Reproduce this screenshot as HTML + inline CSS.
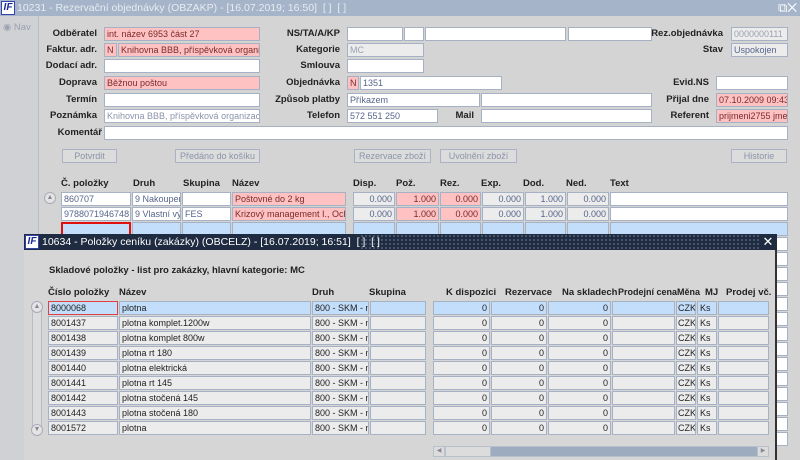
<!DOCTYPE html>
<html><head><meta charset="utf-8"><style>
*{box-sizing:border-box;margin:0;padding:0}
body{width:800px;height:460px;overflow:hidden;background:#d4d4d4;font-family:"Liberation Sans",sans-serif;font-size:10px;position:relative}
div,span{position:absolute}
.f{height:14px;border:1px solid #a6b1c4;background:#fff;line-height:12px;padding:0 2px;white-space:nowrap;overflow:hidden;color:#56658a;font-size:9px}
.p{background:#ffc2c2;color:#7a2a2a}
.g{background:#ececec}
.b{background:#c2defa}
.r{text-align:right}
.l{font-weight:bold;color:#222;text-align:right;width:90px;font-size:9.5px;line-height:14px;white-space:nowrap}
.h{font-weight:bold;color:#222;font-size:9.5px;white-space:nowrap}
.btn{height:14px;border:1px solid #aab3c3;background:#dcdcdc;color:#8a94a8;text-align:center;line-height:12px;font-size:9px;white-space:nowrap}
.d{color:#222}
</style></head><body>
<!-- title bar -->
<div style="left:0;top:0;width:800px;height:16px;background:#a5b4c9"></div>
<div style="left:1px;top:1px;width:14px;height:14px;background:#fff;border:1px solid #3344aa;color:#1a2a9a;font-weight:bold;font-style:italic;font-size:10px;line-height:12px;text-align:center">IF</div>
<div style="left:17px;top:1px;color:#e8ecf2;font-size:10.5px;line-height:14px;white-space:nowrap">10231 - Rezervační objednávky (OBZAKP) - [16.07.2019; 16:50]&nbsp; [ ]&nbsp; [ ]</div>
<div style="left:778px;top:1px;color:#fff;font-size:13px;line-height:14px">⧉✕</div>
<!-- nav -->
<div style="left:0;top:16px;width:39px;height:444px;background:#cfd1d5;border-right:1px solid #b8bcc4"></div>
<div style="left:3px;top:22px;color:#9aa2b0;font-size:9.5px">◉ Nav</div>
<!-- form rows -->
<div class="l" style="left:7px;top:27px">Odběratel</div>
<div class="f p" style="left:104px;top:27px;width:156px">int. název 6953 část 27</div>
<div class="l" style="left:7px;top:43px">Faktur. adr.</div>
<div class="f p" style="left:104px;top:43px;width:13px">N</div>
<div class="f p" style="left:118px;top:43px;width:142px">Knihovna BBB, příspěvková organizac</div>
<div class="l" style="left:7px;top:59px">Dodací adr.</div>
<div class="f" style="left:104px;top:59px;width:156px"></div>
<div class="l" style="left:7px;top:76px">Doprava</div>
<div class="f p" style="left:104px;top:76px;width:156px">Běžnou poštou</div>
<div class="l" style="left:7px;top:93px">Termín</div>
<div class="f" style="left:104px;top:93px;width:156px"></div>
<div class="l" style="left:7px;top:109px">Poznámka</div>
<div class="f" style="left:104px;top:109px;width:156px;color:#8a94aa">Knihovna BBB, příspěvková organizace IČ</div>
<div class="l" style="left:12px;top:126px">Komentář</div>
<div class="f" style="left:104px;top:126px;width:684px"></div>

<div class="l" style="left:250px;top:27px">NS/TA/A/KP</div>
<div class="f" style="left:347px;top:27px;width:56px"></div>
<div class="f" style="left:404px;top:27px;width:20px"></div>
<div class="f" style="left:425px;top:27px;width:141px"></div>
<div class="f" style="left:568px;top:27px;width:84px"></div>
<div class="l" style="left:250px;top:43px">Kategorie</div>
<div class="f g" style="left:347px;top:43px;width:77px;color:#9aa2b2">MC</div>
<div class="l" style="left:250px;top:59px">Smlouva</div>
<div class="f" style="left:347px;top:59px;width:77px"></div>
<div class="l" style="left:250px;top:76px">Objednávka</div>
<div class="f p" style="left:347px;top:76px;width:12px">N</div>
<div class="f" style="left:360px;top:76px;width:142px">1351</div>
<div class="l" style="left:250px;top:93px">Způsob platby</div>
<div class="f" style="left:347px;top:93px;width:133px">Příkazem</div>
<div class="f" style="left:481px;top:93px;width:171px"></div>
<div class="l" style="left:384px;top:109px">Mail</div>
<div class="l" style="left:250px;top:109px">Telefon</div>
<div class="f" style="left:347px;top:109px;width:91px">572 551 250</div>
<div class="f" style="left:481px;top:109px;width:171px"></div>

<div class="l" style="left:633px;top:27px">Rez.objednávka</div>
<div class="f g" style="left:731px;top:27px;width:57px;color:#9aa2b2">0000000111</div>
<div class="l" style="left:633px;top:43px">Stav</div>
<div class="f g" style="left:731px;top:43px;width:57px">Uspokojen</div>
<div class="l" style="left:619px;top:76px">Evid.NS</div>
<div class="f" style="left:716px;top:76px;width:72px"></div>
<div class="l" style="left:619px;top:93px">Přijal dne</div>
<div class="f p" style="left:716px;top:93px;width:72px">07.10.2009 09:43</div>
<div class="l" style="left:619px;top:109px">Referent</div>
<div class="f p" style="left:716px;top:109px;width:72px">prijmeni2755 jmeno</div>

<div class="btn" style="left:62px;top:149px;width:55px">Potvrdit</div>
<div class="btn" style="left:175px;top:149px;width:85px">Předáno do košíku</div>
<div class="btn" style="left:354px;top:149px;width:77px">Rezervace zboží</div>
<div class="btn" style="left:440px;top:149px;width:77px">Uvolnění zboží</div>
<div class="btn" style="left:731px;top:149px;width:56px">Historie</div>

<!-- grid headers -->
<div class="h" style="left:61px;top:178px">Č. položky</div>
<div class="h" style="left:133px;top:178px">Druh</div>
<div class="h" style="left:183px;top:178px">Skupina</div>
<div class="h" style="left:232px;top:178px">Název</div>
<div class="h" style="left:353px;top:178px">Disp.</div>
<div class="h" style="left:396px;top:178px">Pož.</div>
<div class="h" style="left:440px;top:178px">Rez.</div>
<div class="h" style="left:481px;top:178px">Exp.</div>
<div class="h" style="left:523px;top:178px">Dod.</div>
<div class="h" style="left:566px;top:178px">Ned.</div>
<div class="h" style="left:610px;top:178px">Text</div>
<div style="left:44px;top:192px;width:12px;height:12px;border:1px solid #aab;border-radius:6px;background:#e4e4e4;color:#889;font-size:7px;text-align:center;line-height:10px">▲</div>
<!-- row1 -->
<div class="f" style="left:61px;top:192px;width:70px">860707</div>
<div class="f" style="left:132px;top:192px;width:49px">9 Nakoupené</div>
<div class="f" style="left:182px;top:192px;width:49px"></div>
<div class="f p" style="left:232px;top:192px;width:114px">Poštovné do 2 kg</div>
<div class="f g r" style="left:353px;top:192px;width:42px">0.000</div>
<div class="f p r" style="left:396px;top:192px;width:43px">1.000</div>
<div class="f p r" style="left:440px;top:192px;width:41px">0.000</div>
<div class="f g r" style="left:482px;top:192px;width:42px">0.000</div>
<div class="f g r" style="left:525px;top:192px;width:41px">1.000</div>
<div class="f g r" style="left:567px;top:192px;width:42px">0.000</div>
<div class="f" style="left:610px;top:192px;width:178px"></div>
<!-- row2 -->
<div class="f" style="left:61px;top:207px;width:70px">9788071946748</div>
<div class="f" style="left:132px;top:207px;width:49px">9 Vlastní výr</div>
<div class="f" style="left:182px;top:207px;width:49px">FES</div>
<div class="f p" style="left:232px;top:207px;width:114px">Krizový management I., Ochran</div>
<div class="f g r" style="left:353px;top:207px;width:42px">0.000</div>
<div class="f p r" style="left:396px;top:207px;width:43px">1.000</div>
<div class="f p r" style="left:440px;top:207px;width:41px">0.000</div>
<div class="f g r" style="left:482px;top:207px;width:42px">0.000</div>
<div class="f g r" style="left:525px;top:207px;width:41px">1.000</div>
<div class="f g r" style="left:567px;top:207px;width:42px">0.000</div>
<div class="f" style="left:610px;top:207px;width:178px"></div>
<!-- row3 -->
<div class="f b" style="left:61px;top:222px;width:70px;height:15px;border:2px solid #e01010"></div>
<div class="f b" style="left:132px;top:222px;width:49px"></div>
<div class="f b" style="left:182px;top:222px;width:49px"></div>
<div class="f b" style="left:232px;top:222px;width:114px"></div>
<div class="f b" style="left:353px;top:222px;width:42px"></div>
<div class="f b" style="left:396px;top:222px;width:43px"></div>
<div class="f b" style="left:440px;top:222px;width:41px"></div>
<div class="f b" style="left:482px;top:222px;width:42px"></div>
<div class="f b" style="left:525px;top:222px;width:41px"></div>
<div class="f b" style="left:567px;top:222px;width:42px"></div>
<div class="f b" style="left:610px;top:222px;width:178px"></div>
<!-- right-side white cells behind popup -->
<div class="f" style="left:776px;top:237px;width:12px"></div>
<div class="f" style="left:776px;top:252px;width:12px"></div>
<div class="f" style="left:776px;top:267px;width:12px"></div>
<div class="f" style="left:776px;top:282px;width:12px"></div>
<div class="f" style="left:776px;top:297px;width:12px"></div>
<div class="f" style="left:776px;top:312px;width:12px"></div>
<div class="f" style="left:776px;top:327px;width:12px"></div>
<div class="f" style="left:776px;top:342px;width:12px"></div>
<div class="f" style="left:776px;top:357px;width:12px"></div>
<div class="f" style="left:776px;top:372px;width:12px"></div>
<div class="f" style="left:776px;top:387px;width:12px"></div>
<div class="f" style="left:776px;top:402px;width:12px"></div>
<div class="f" style="left:776px;top:417px;width:12px"></div>
<div class="f" style="left:776px;top:432px;width:12px"></div>

<!-- popup -->
<div style="left:24px;top:235px;width:753px;height:225px;background:#d6d6d6;border-right:2px solid #333"></div>
<div style="left:24px;top:234px;width:753px;height:16px;background:#1f2b40;background-image:radial-gradient(#56627a 0.8px,transparent 1px);background-size:4px 4px"></div>
<div style="left:24px;top:234px;width:335px;height:16px;background:#1f2b40"></div>
<div style="left:25px;top:235px;width:14px;height:14px;background:#fff;border:1px solid #3344aa;color:#1a2a9a;font-weight:bold;font-style:italic;font-size:10px;line-height:12px;text-align:center">IF</div>
<div style="left:42px;top:235px;color:#fff;font-size:10.5px;line-height:14px;white-space:nowrap">10634 - Položky ceníku (zakázky) (OBCELZ) - [16.07.2019; 16:51]&nbsp; [ ]&nbsp; [ ]</div>
<div style="left:761px;top:234px;width:14px;height:16px;background:#1f2b40;color:#fff;font-size:13px;line-height:16px;text-align:center">✕</div>
<div class="h" style="left:49px;top:265px">Skladové položky - list pro zakázky, hlavní kategorie: MC</div>

<div class="h" style="left:48px;top:287px">Číslo položky</div>
<div class="h" style="left:119px;top:287px">Název</div>
<div class="h" style="left:312px;top:287px">Druh</div>
<div class="h" style="left:369px;top:287px">Skupina</div>
<div class="h" style="left:446px;top:287px">K dispozici</div>
<div class="h" style="left:505px;top:287px">Rezervace</div>
<div class="h" style="left:562px;top:287px">Na skladech</div>
<div class="h" style="left:618px;top:287px;font-size:9px">Prodejní cena</div>
<div class="h" style="left:677px;top:287px;font-size:9px">Měna</div>
<div class="h" style="left:705px;top:287px">MJ</div>
<div class="h" style="left:726px;top:287px">Prodej vč.</div>

<div style="left:32px;top:301px;width:10px;height:135px;background:#dcdcdc;border:1px solid #b8bcc4;border-radius:5px"></div>
<div style="left:31px;top:301px;width:12px;height:12px;border:1px solid #aab;border-radius:6px;background:#e4e4e4;color:#889;font-size:7px;text-align:center;line-height:10px">▲</div>
<div style="left:31px;top:424px;width:12px;height:12px;border:1px solid #aab;border-radius:6px;background:#e4e4e4;color:#889;font-size:7px;text-align:center;line-height:10px">▼</div>

<div class="f b d" style="left:48px;top:301px;width:70px;border-color:#e04040">8000068</div>
<div class="f b d" style="left:119px;top:301px;width:192px">plotna</div>
<div class="f b d" style="left:312px;top:301px;width:57px">800 - SKM - ma</div>
<div class="f b" style="left:370px;top:301px;width:56px"></div>
<div class="f b d r" style="left:433px;top:301px;width:57px">0</div>
<div class="f b d r" style="left:491px;top:301px;width:56px">0</div>
<div class="f b d r" style="left:548px;top:301px;width:63px">0</div>
<div class="f b" style="left:612px;top:301px;width:63px"></div>
<div class="f b d" style="left:676px;top:301px;width:20px;padding:0 1px">CZK</div>
<div class="f b d" style="left:697px;top:301px;width:20px">Ks</div>
<div class="f b" style="left:718px;top:301px;width:51px"></div>

<div class="f g d" style="left:48px;top:316px;width:70px">8001437</div><div class="f g d" style="left:119px;top:316px;width:192px">plotna komplet.1200w</div><div class="f g d" style="left:312px;top:316px;width:57px">800 - SKM - ma</div><div class="f g" style="left:370px;top:316px;width:56px"></div><div class="f g d r" style="left:433px;top:316px;width:57px">0</div><div class="f g d r" style="left:491px;top:316px;width:56px">0</div><div class="f g d r" style="left:548px;top:316px;width:63px">0</div><div class="f g" style="left:612px;top:316px;width:63px"></div><div class="f g d" style="left:676px;top:316px;width:20px;padding:0 1px">CZK</div><div class="f g d" style="left:697px;top:316px;width:20px">Ks</div><div class="f g" style="left:718px;top:316px;width:51px"></div>

<div class="f g d" style="left:48px;top:331px;width:70px">8001438</div><div class="f g d" style="left:119px;top:331px;width:192px">plotna komplet 800w</div><div class="f g d" style="left:312px;top:331px;width:57px">800 - SKM - ma</div><div class="f g" style="left:370px;top:331px;width:56px"></div><div class="f g d r" style="left:433px;top:331px;width:57px">0</div><div class="f g d r" style="left:491px;top:331px;width:56px">0</div><div class="f g d r" style="left:548px;top:331px;width:63px">0</div><div class="f g" style="left:612px;top:331px;width:63px"></div><div class="f g d" style="left:676px;top:331px;width:20px;padding:0 1px">CZK</div><div class="f g d" style="left:697px;top:331px;width:20px">Ks</div><div class="f g" style="left:718px;top:331px;width:51px"></div>

<div class="f g d" style="left:48px;top:346px;width:70px">8001439</div><div class="f g d" style="left:119px;top:346px;width:192px">plotna rt 180</div><div class="f g d" style="left:312px;top:346px;width:57px">800 - SKM - ma</div><div class="f g" style="left:370px;top:346px;width:56px"></div><div class="f g d r" style="left:433px;top:346px;width:57px">0</div><div class="f g d r" style="left:491px;top:346px;width:56px">0</div><div class="f g d r" style="left:548px;top:346px;width:63px">0</div><div class="f g" style="left:612px;top:346px;width:63px"></div><div class="f g d" style="left:676px;top:346px;width:20px;padding:0 1px">CZK</div><div class="f g d" style="left:697px;top:346px;width:20px">Ks</div><div class="f g" style="left:718px;top:346px;width:51px"></div>

<div class="f g d" style="left:48px;top:361px;width:70px">8001440</div><div class="f g d" style="left:119px;top:361px;width:192px">plotna elektrická</div><div class="f g d" style="left:312px;top:361px;width:57px">800 - SKM - ma</div><div class="f g" style="left:370px;top:361px;width:56px"></div><div class="f g d r" style="left:433px;top:361px;width:57px">0</div><div class="f g d r" style="left:491px;top:361px;width:56px">0</div><div class="f g d r" style="left:548px;top:361px;width:63px">0</div><div class="f g" style="left:612px;top:361px;width:63px"></div><div class="f g d" style="left:676px;top:361px;width:20px;padding:0 1px">CZK</div><div class="f g d" style="left:697px;top:361px;width:20px">Ks</div><div class="f g" style="left:718px;top:361px;width:51px"></div>

<div class="f g d" style="left:48px;top:376px;width:70px">8001441</div><div class="f g d" style="left:119px;top:376px;width:192px">plotna rt 145</div><div class="f g d" style="left:312px;top:376px;width:57px">800 - SKM - ma</div><div class="f g" style="left:370px;top:376px;width:56px"></div><div class="f g d r" style="left:433px;top:376px;width:57px">0</div><div class="f g d r" style="left:491px;top:376px;width:56px">0</div><div class="f g d r" style="left:548px;top:376px;width:63px">0</div><div class="f g" style="left:612px;top:376px;width:63px"></div><div class="f g d" style="left:676px;top:376px;width:20px;padding:0 1px">CZK</div><div class="f g d" style="left:697px;top:376px;width:20px">Ks</div><div class="f g" style="left:718px;top:376px;width:51px"></div>

<div class="f g d" style="left:48px;top:391px;width:70px">8001442</div><div class="f g d" style="left:119px;top:391px;width:192px">plotna stočená 145</div><div class="f g d" style="left:312px;top:391px;width:57px">800 - SKM - ma</div><div class="f g" style="left:370px;top:391px;width:56px"></div><div class="f g d r" style="left:433px;top:391px;width:57px">0</div><div class="f g d r" style="left:491px;top:391px;width:56px">0</div><div class="f g d r" style="left:548px;top:391px;width:63px">0</div><div class="f g" style="left:612px;top:391px;width:63px"></div><div class="f g d" style="left:676px;top:391px;width:20px;padding:0 1px">CZK</div><div class="f g d" style="left:697px;top:391px;width:20px">Ks</div><div class="f g" style="left:718px;top:391px;width:51px"></div>

<div class="f g d" style="left:48px;top:406px;width:70px">8001443</div><div class="f g d" style="left:119px;top:406px;width:192px">plotna stočená 180</div><div class="f g d" style="left:312px;top:406px;width:57px">800 - SKM - ma</div><div class="f g" style="left:370px;top:406px;width:56px"></div><div class="f g d r" style="left:433px;top:406px;width:57px">0</div><div class="f g d r" style="left:491px;top:406px;width:56px">0</div><div class="f g d r" style="left:548px;top:406px;width:63px">0</div><div class="f g" style="left:612px;top:406px;width:63px"></div><div class="f g d" style="left:676px;top:406px;width:20px;padding:0 1px">CZK</div><div class="f g d" style="left:697px;top:406px;width:20px">Ks</div><div class="f g" style="left:718px;top:406px;width:51px"></div>

<div class="f g d" style="left:48px;top:421px;width:70px">8001572</div><div class="f g d" style="left:119px;top:421px;width:192px">plotna</div><div class="f g d" style="left:312px;top:421px;width:57px">800 - SKM - ma</div><div class="f g" style="left:370px;top:421px;width:56px"></div><div class="f g d r" style="left:433px;top:421px;width:57px">0</div><div class="f g d r" style="left:491px;top:421px;width:56px">0</div><div class="f g d r" style="left:548px;top:421px;width:63px">0</div><div class="f g" style="left:612px;top:421px;width:63px"></div><div class="f g d" style="left:676px;top:421px;width:20px;padding:0 1px">CZK</div><div class="f g d" style="left:697px;top:421px;width:20px">Ks</div><div class="f g" style="left:718px;top:421px;width:51px"></div>

<!-- h scrollbar -->
<div style="left:433px;top:446px;width:336px;height:11px;background:#9eacc0;border:1px solid #b8c0cc"></div>
<div style="left:433px;top:446px;width:12px;height:11px;background:#dcdcdc;border:1px solid #b8c0cc;font-size:6px;color:#889;text-align:center;line-height:9px">◀</div>
<div style="left:445px;top:446px;width:46px;height:11px;background:#dcdcdc;border:1px solid #b8c0cc"></div>
<div style="left:757px;top:446px;width:12px;height:11px;background:#dcdcdc;border:1px solid #b8c0cc;font-size:6px;color:#889;text-align:center;line-height:9px">▶</div>
</body></html>
